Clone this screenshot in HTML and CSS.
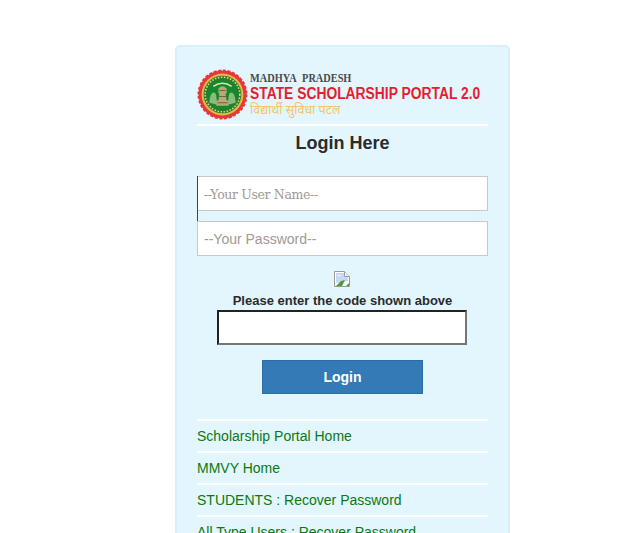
FILE: index.html
```html
<!DOCTYPE html>
<html lang="en">
<head>
    <meta charset="UTF-8">
    <meta name="viewport" content="width=device-width, initial-scale=1.0">
    <title>State Scholarship Portal</title>
    <link rel="stylesheet" href="styles.css">
</head>
<body>
    <div class="card">
        <div class="logo">
            <svg class="emblem" width="51" height="51" viewBox="0 0 50 50">
                <circle cx="25" cy="25" r="23.5" fill="#e8353f" stroke="#e8353f" stroke-width="2" stroke-dasharray="3 1.6"/>
                <circle cx="25" cy="25" r="20.500" fill="#e3bd3a"/>
                <circle cx="25" cy="25" r="18.500" fill="#2f7a2c"/>
                <circle cx="25" cy="25" r="17" fill="none" stroke="#cfd9a0" stroke-width="1.500" stroke-dasharray="1.5 1.5"/>
                <circle cx="25" cy="25" r="14.500" fill="#128a2c"/>
                <path d="M12 33q1-10 4-10t3 5l1 7zM38 33q-1-10-4-10t-3 5l-1 7z" fill="#9fc48a" opacity=".85"/>
                <path d="M16 17q9-6 18 0" fill="none" stroke="#d6e6b0" stroke-width="1.500"/>
                <path d="M21 19q4-4 8 0v5h-8zM22 24h6l1 7h-8zM19 31h12v5H19z" fill="#b9a878"/>
                <path d="M22 21h6M21 27h8M20 33h10" stroke="#6f6540" stroke-width="1"/>
            </svg>
            <div class="logo_text">
                <div class="logo_state">MADHYA PRADESH</div>
                <div class="logo_name">STATE SCHOLARSHIP PORTAL 2.0</div>
                <div class="logo_hindi">विद्यार्थी सुविधा पटल</div>
            </div>
        </div>
        <h1>Login Here</h1>
        <form class="login_form">
            <div class="field field_user">
                <input class="input_user" type="text" placeholder="--Your User Name--">
            </div>
            <div class="field">
                <input class="input_pass" type="text" placeholder="--Your Password--">
            </div>
            <div class="captcha_img">
                <svg width="16" height="16" viewBox="0 0 16 16">
                    <path d="M.5.5h10l5 5v10H.5z" fill="#fff" stroke="#9a9a9a"/>
                    <path d="M2 2h8v4h4v4L2 12z" fill="#c5d8f5"/>
                    <path d="M3 5q2-2 4 0H3z" fill="#fff"/>
                    <path d="M2 15l5-5 4-1-3 6z" fill="#4f9a38"/>
                    <path d="M12 15l3-3v3z" fill="#4f9a38"/>
                    <path d="M10.500.5v5h5" fill="#f2f2f2" stroke="#9a9a9a"/>
                </svg>
            </div>
            <label class="captcha_label">Please enter the code shown above</label>
            <input class="input_code" type="text">
            <button class="login_btn" type="button">Login</button>
        </form>
        <ul class="links">
            <li><a href="#">Scholarship Portal Home</a></li>
            <li><a href="#">MMVY Home</a></li>
            <li><a href="#">STUDENTS : Recover Password</a></li>
            <li><a href="#">All Type Users : Recover Password</a></li>
        </ul>
    </div>
</body>
</html>
```

FILE: styles.css
```css
html, body {
    height: 100%;
    overflow: hidden;
}
body {
    margin: 0;
    background-color: white;
    font-family: "Liberation Sans", Arial, sans-serif;
    color: #333;
}
.card {
    width: 335px;
    box-sizing: border-box;
    margin: 45px 0 0 175px;
    padding: 20px 20px 20px;
    background-color: #e3f6fe;
    border: 2px solid #d5f0fb;
    border-radius: 5px;
}
.logo {
    display: flex;
    align-items: center;
    gap: 2px;
    height: 57px;
    border-bottom: 2px solid white;
}
.emblem {
    flex: none;
    margin-top: -3px;
}
.logo_text {
    margin-top: -3px;
    white-space: nowrap;
}
.logo_state {
    font-family: "Liberation Serif", serif;
    font-weight: bold;
    font-size: 12px;
    line-height: 13px;
    word-spacing: 4px;
    color: #4a4a4a;
    transform: scaleX(0.86);
    transform-origin: left;
}
.logo_name {
    font-weight: bold;
    font-size: 16px;
    line-height: 17px;
    color: #e81c30;
    transform: scaleX(0.865);
    transform-origin: left;
}
.logo_hindi {
    font-family: "Noto Sans", "Noto Sans CJK SC", sans-serif;
    font-size: 12.500px;
    line-height: 15px;
    color: #f5c36c;
}
h1 {
    margin: 6px 0 22px;
    font-size: 18px;
    line-height: 22px;
    text-align: center;
    color: #2b2b2b;
}
.login_form {
    display: flex;
    flex-direction: column;
    align-items: center;
}
.field {
    width: 100%;
    height: 45px;
}
.field_user {
    position: relative;
}
/* green line runs past the bottom of the first input */
.field_user::before {
    content: "";
    position: absolute;
    left: 0;
    top: 0;
    bottom: 0;
    border-left: 1px solid #0b6b0b;
}
.field input {
    display: block;
    width: 100%;
    height: 35px;
    box-sizing: border-box;
    padding: 0 6px;
    background-color: white;
    border: 1px solid #c8c8c8;
    border-radius: 0;
    font-size: 14px;
    outline: none;
}
.input_user {
    font-family: "DejaVu Serif", "Liberation Serif", serif;
}
.input_user::placeholder {
    color: #a09a94;
    font-size: 12.500px;
    letter-spacing: -0.35px;
}
.input_pass {
    font-family: "Liberation Sans", Arial, sans-serif;
}
.input_pass::placeholder {
    color: #a09a94;
}
.captcha_img {
    height: 16px;
    margin: 5px 1px 0 0;
}
.captcha_img svg {
    display: block;
}
.captcha_label {
    margin-top: 5px;
    font-weight: bold;
    font-size: 13px;
    line-height: 18px;
    color: #2b2b2b;
}
.input_code {
    width: 250px;
    height: 35px;
    box-sizing: border-box;
    margin: 0 1px 0 0;
    padding: 0 6px;
    background-color: white;
    border-width: 2px;
    border-style: solid;
    border-color: #222 #767676 #767676 #222;
    outline: none;
}
.login_btn {
    width: 161px;
    height: 34px;
    margin-top: 15px;
    padding: 0;
    background-color: #337ab7;
    border: 1px solid #2e6da4;
    color: white;
    font-family: "Liberation Sans", Arial, sans-serif;
    font-weight: bold;
    font-size: 14px;
}
.links {
    list-style: none;
    margin: 25px 0 0;
    padding: 0;
}
.links li {
    height: 30px;
    border-top: 2px solid white;
    font-size: 14px;
    line-height: 30px;
}
.links a {
    color: #087a10;
    text-decoration: none;
}
```
